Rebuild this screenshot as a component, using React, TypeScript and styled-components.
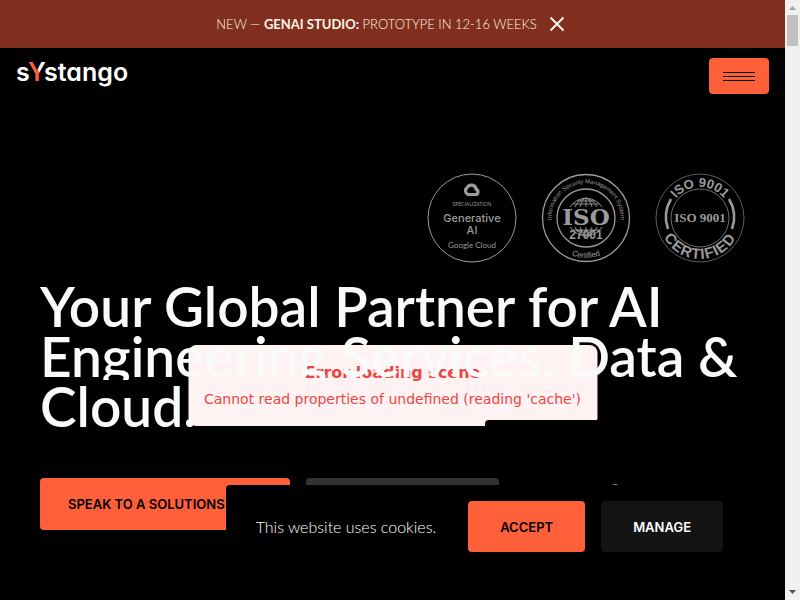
import React from "react";
import styled, { createGlobalStyle } from "styled-components";

const ORANGE = "#ff5f39";
const BADGE_GREY = "#9b9b9b";

const GlobalStyle = createGlobalStyle`
  *, *::before, *::after { box-sizing: border-box; }
  body {
    margin: 0;
    background: #000;
    color: #fff;
    font-family: Lato, "Open Sans", sans-serif;
  }
  button, a { font: inherit; color: inherit; }
  button { border: 0; padding: 0; cursor: pointer; }
`;

const Shell = styled.div`
  display: flex;
  height: 100vh;
  overflow: hidden;
`;

const Page = styled.div`
  position: relative;
  flex: 1;
  min-width: 0;
  overflow: hidden;
  background: #000;
`;

const ScrollRail = styled.div`
  display: flex;
  flex-direction: column;
  align-items: center;
  width: 15px;
  background: #f0f0f0;
`;

const ScrollArrow = styled.svg`
  display: block;
  width: 15px;
  height: 15px;
`;

const ScrollThumb = styled.div`
  width: 11px;
  height: 31px;
  margin-bottom: auto;
  background: #c1c1c1;
`;

const Announcement = styled.div`
  display: flex;
  align-items: center;
  justify-content: center;
  gap: 12px;
  height: 48px;
  padding-right: 4px;
  background: #802e1d;
  color: #fff4ec;
  font-size: 13px;
  font-weight: 300;
  white-space: nowrap;

  strong { font-weight: 700; }
`;

const AnnouncementText = styled.p`
  margin: 0;
  line-height: 16px;
`;

const CloseButton = styled.button`
  display: grid;
  place-items: center;
  background: none;
`;

const Header = styled.header`
  display: flex;
  align-items: center;
  justify-content: space-between;
  padding: 10px 16px;
`;

const LogoLink = styled.a`
  display: block;
  line-height: 0;

  svg { display: block; }

  text {
    font-family: Inter, sans-serif;
    font-size: 25px;
    font-weight: 600;
    font-feature-settings: "cv11";
  }
`;

const MenuButton = styled.button`
  display: flex;
  flex-direction: column;
  align-items: center;
  justify-content: center;
  gap: 3px;
  width: 60px;
  height: 36px;
  border-radius: 4px;
  background: ${ORANGE};
`;

const MenuLine = styled.span`
  width: 32px;
  height: 1px;
  background: #000;
`;

const Hero = styled.main`
  padding: 69px 40px 0;
`;

const Badges = styled.div`
  display: flex;
  justify-content: flex-end;
  gap: 24px;

  svg { display: block; }
`;

const Title = styled.h1`
  position: relative;
  z-index: 2;
  margin: 17px 0 0;
  color: #fafafa;
  font-size: 55px;
  font-weight: 600;
  line-height: 50px;
  white-space: nowrap;
`;

const TitleLine = styled.span`
  display: block;
  padding-top: 1px;
  height: 50px;
  overflow: hidden;
`;

const Actions = styled.div`
  display: flex;
  align-items: flex-start;
  gap: 16px;
  margin-top: 48px;
`;

const ActionButton = styled.button<{ $tone: "primary" | "muted" }>`
  width: ${(p) => (p.$tone === "primary" ? 250 : 193)}px;
  height: 52px;
  padding: 0 28px;
  border-radius: 4px;
  background: ${(p) => (p.$tone === "primary" ? ORANGE : "#333")};
  color: #000;
  font-family: Inter, sans-serif;
  font-size: 13px;
  font-weight: 600;
  text-align: left;
  white-space: nowrap;
`;

const SparkSlot = styled.span`
  display: block;
  margin: 6px 0 0 94px;
  line-height: 0;
`;

const SceneError = styled.div`
  position: absolute;
  z-index: 1;
  top: 345px;
  left: 50%;
  transform: translateX(-50%);
  padding: 16px 16px 17px;
  border-radius: 8px;
  background: #fef2f2;
  color: #ef4444;
  font-family: "DejaVu Sans", sans-serif;
  text-align: center;
  white-space: nowrap;
`;

const ErrorTitle = styled.p`
  margin: 0 0 4px;
  font-size: 16px;
  font-weight: 700;
  line-height: 24px;
`;

const ErrorMessage = styled.p`
  margin: 0;
  font-size: 14px;
  line-height: 20px;
`;

const VideoPanel = styled.div`
  position: absolute;
  z-index: 1;
  top: 420px;
  right: 0;
  width: 300px;
  height: 48px;
  border-radius: 4px;
  background: #000;
`;

const CookieBar = styled.section`
  position: absolute;
  z-index: 3;
  right: 32px;
  bottom: 32px;
  display: flex;
  align-items: center;
  gap: 16px;
  padding: 16px 30px;
  border-radius: 4px;
  background: #000;
`;

const CookieText = styled.p`
  margin: 0 16px 0 0;
  font-size: 16px;
  font-weight: 300;
  white-space: nowrap;
`;

const CookieButton = styled.button<{ $primary?: boolean }>`
  height: 51px;
  padding: 0 32px;
  border-radius: 4px;
  background: ${(p) => (p.$primary ? ORANGE : "#141414")};
  color: ${(p) => (p.$primary ? "#000" : "#fff")};
  font-family: Inter, sans-serif;
  font-size: 13px;
  font-weight: 600;
`;

const Logo = () => (
  <svg width="118" height="36" viewBox="0 0 118 36" aria-hidden="true">
    <defs>
      <linearGradient id="logo-y" gradientUnits="userSpaceOnUse" x1="13.500" y1="20" x2="33.500" y2="10">
        <stop offset="0.500" stopColor={ORANGE} />
        <stop offset="0.500" stopColor="#fff" />
      </linearGradient>
    </defs>
    <text x="0" y="23" fill="#fff">
      s<tspan fill="url(#logo-y)">Y</tspan>stango
    </text>
  </svg>
);

const GenerativeAiBadge = () => (
  <svg width="90" height="90" viewBox="0 0 90 90" role="img" aria-label="Google Cloud specialization, Generative AI">
    <circle cx="45" cy="45" r="44" fill="none" stroke={BADGE_GREY} />
    <path
      d="M41 21.5h7.5a2.6 2.6 0 0 0 .6-5.1 4.8 4.8 0 0 0-9-1.8 4 4 0 0 0 .9 6.9Z"
      fill="none"
      stroke={BADGE_GREY}
      strokeWidth="3.2"
      strokeLinejoin="round"
    />
    <g fill={BADGE_GREY} textAnchor="middle">
      <text x="45" y="33" fontFamily="Lato" fontSize="5">SPECIALIZATION</text>
      <text x="45" y="49" fontFamily="Inter" fontSize="11" fontWeight="500">Generative</text>
      <text x="45" y="61" fontFamily="Inter" fontSize="11" fontWeight="500">AI</text>
      <text x="45" y="75" fontFamily="Lato" fontSize="8">Google Cloud</text>
    </g>
  </svg>
);

const Iso27001Badge = () => (
  <svg width="90" height="90" viewBox="0 0 90 90" role="img" aria-label="ISO 27001 certified">
    <defs>
      <path id="iso27-top" d="M12.600 56.800A34.500 34.500 0 1 1 77.400 56.800" />
      <path id="iso27-bottom" d="M5 45a40 40 0 0 0 80 0" />
    </defs>
    <g fill="none" stroke={BADGE_GREY}>
      <circle cx="45" cy="45" r="43.500" strokeWidth="1.300" />
      <circle cx="45" cy="45" r="29" strokeWidth="1.300" />
      <g strokeWidth="0.900">
        <path d="M29 34a19 19 0 0 1 32 0M29 54a19 19 0 0 0 32 0" />
        <path d="M39 34q2-8 6-9 4 1 6 9M34 34q3-7 11-9 8 2 11 9M45 25v9M32 31h26M36 28h18" />
        <path d="M39 54q2 7 6 9 4-2 6-9M34 54q3 7 11 9 8-2 11-9M45 54v9M32 57h26" />
      </g>
    </g>
    <g fill={BADGE_GREY}>
      <text x="45" y="52" textAnchor="middle" fontFamily="DejaVu Serif" fontSize="23" fontWeight="700">ISO</text>
      <text x="45" y="66" textAnchor="middle" fontFamily="Liberation Sans" fontSize="12" fontWeight="700">27001</text>
      <text fontFamily="Liberation Sans" fontSize="6">
        <textPath href="#iso27-top" startOffset="50%" textAnchor="middle">Information Security Management System</textPath>
      </text>
      <text fontFamily="Liberation Sans" fontSize="8">
        <textPath href="#iso27-bottom" startOffset="50%" textAnchor="middle">Certified</textPath>
      </text>
    </g>
  </svg>
);

const Iso9001Badge = () => (
  <svg width="90" height="90" viewBox="0 0 90 90" role="img" aria-label="ISO 9001 certified">
    <defs>
      <path id="iso9-top" d="M14 45a31 31 0 0 1 62 0" />
      <path id="iso9-bottom" d="M4 45a41 41 0 0 0 82 0" />
    </defs>
    <g fill="none" stroke={BADGE_GREY}>
      <circle cx="45" cy="45" r="44" strokeWidth="0.600" />
      <circle cx="45" cy="45" r="29" strokeWidth="0.700" />
      <path d="M16 26a35 35 0 0 0-3 30M74 26a35 35 0 0 1 3 30" strokeWidth="2.600" />
    </g>
    <g fill={BADGE_GREY} fontWeight="700">
      <text x="45" y="49" textAnchor="middle" fontFamily="Liberation Serif" fontSize="13">ISO 9001</text>
      <text fontFamily="Liberation Sans" fontSize="13">
        <textPath href="#iso9-top" startOffset="50%" textAnchor="middle">ISO 9001</textPath>
      </text>
      <text fontFamily="Liberation Sans" fontSize="15" letterSpacing="1">
        <textPath href="#iso9-bottom" startOffset="50%" textAnchor="middle">CERTIFIED</textPath>
      </text>
    </g>
  </svg>
);

export default function App() {
  return (
    <>
      <GlobalStyle />
      <Shell>
        <Page>
          <Announcement>
            <AnnouncementText>
              NEW — <strong>GENAI STUDIO:</strong> PROTOTYPE IN 12-16 WEEKS
            </AnnouncementText>
            <CloseButton aria-label="Close announcement">
              <svg width="16" height="16" viewBox="0 0 16 16">
                <path d="M1.500 1.500l13 13M14.500 1.500l-13 13" stroke="#fff4ec" strokeWidth="2" />
              </svg>
            </CloseButton>
          </Announcement>

          <Header>
            <LogoLink href="#" aria-label="Systango home">
              <Logo />
            </LogoLink>
            <MenuButton aria-label="Open menu">
              <MenuLine />
              <MenuLine />
              <MenuLine />
            </MenuButton>
          </Header>

          <Hero>
            <Badges>
              <GenerativeAiBadge />
              <Iso27001Badge />
              <Iso9001Badge />
            </Badges>
            <Title>
              <TitleLine>Your Global Partner for AI</TitleLine>
              <TitleLine>Engineering Services, Data &amp;</TitleLine>
              <TitleLine>Cloud.</TitleLine>
            </Title>
            <Actions>
              <ActionButton $tone="primary">SPEAK TO A SOLUTIONS</ActionButton>
              <ActionButton $tone="muted" aria-label="Learn more" />
              <SparkSlot>
                <svg width="12" height="12" viewBox="0 0 12 12" aria-hidden="true">
                  <defs>
                    <linearGradient id="spark">
                      <stop offset="0.300" stopColor="#e8622c" />
                      <stop offset="0.700" stopColor="#c9c24a" />
                    </linearGradient>
                  </defs>
                  <circle cx="6" cy="6" r="6" fill="url(#spark)" />
                </svg>
              </SparkSlot>
            </Actions>
          </Hero>

          <SceneError role="alert">
            <ErrorTitle>Error loading scene</ErrorTitle>
            <ErrorMessage>Cannot read properties of undefined (reading 'cache')</ErrorMessage>
          </SceneError>
          <VideoPanel />

          <CookieBar aria-label="Cookie consent">
            <CookieText>This website uses cookies.</CookieText>
            <CookieButton $primary>ACCEPT</CookieButton>
            <CookieButton>MANAGE</CookieButton>
          </CookieBar>
        </Page>

        <ScrollRail aria-hidden="true">
          <ScrollArrow viewBox="0 0 15 15">
            <path d="M4 10h7L7.500 6z" fill="#a3a3a3" />
          </ScrollArrow>
          <ScrollThumb />
          <ScrollArrow viewBox="0 0 15 15">
            <path d="M4 5h7L7.500 9z" fill="#505050" />
          </ScrollArrow>
        </ScrollRail>
      </Shell>
    </>
  );
}
